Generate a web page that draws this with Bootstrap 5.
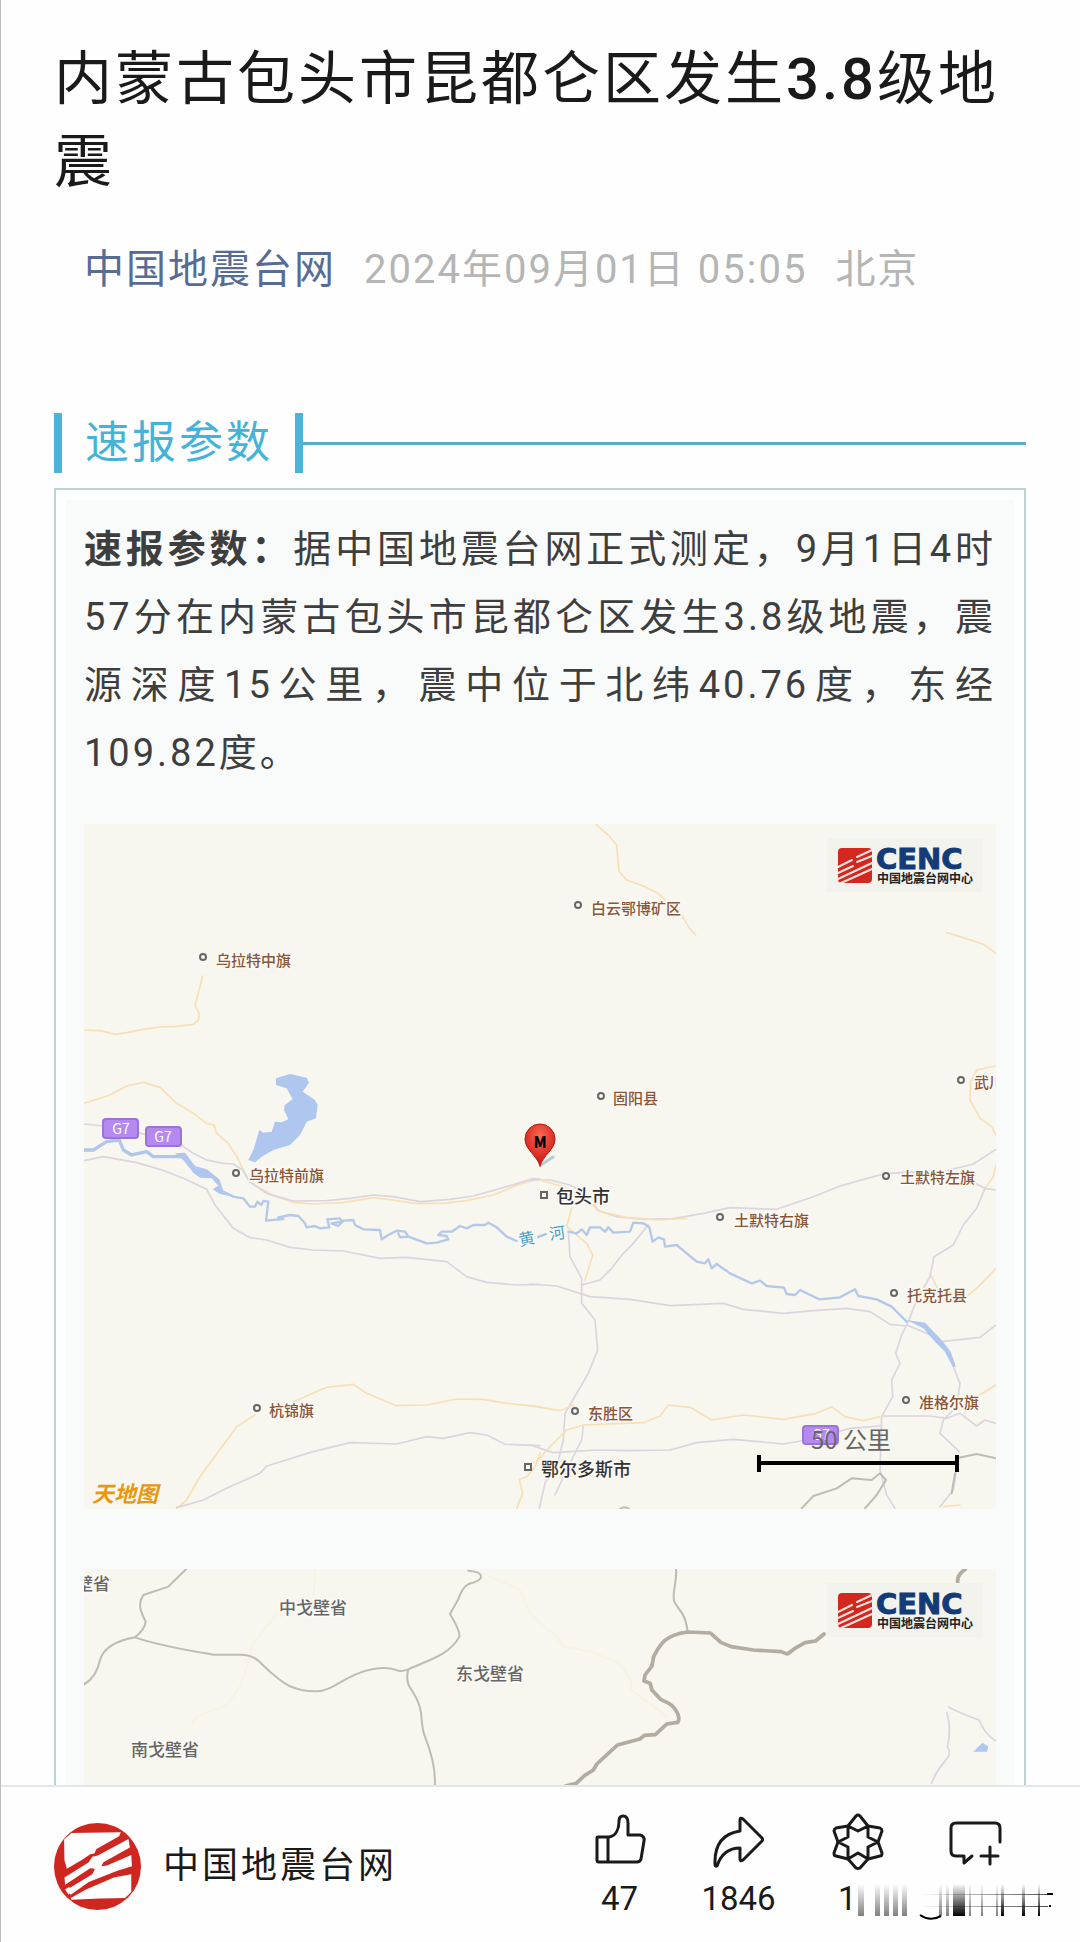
<!DOCTYPE html>
<html lang="zh-CN">
<head>
<meta charset="utf-8">
<meta name="viewport" content="width=device-width, initial-scale=1">
<title>内蒙古包头市昆都仑区发生3.8级地震</title>
<link href="https://cdn.jsdelivr.net/npm/bootstrap@5.3.0/dist/css/bootstrap.min.css" rel="stylesheet">
<style>
  body { font-family: Roboto, "Noto Sans CJK SC", sans-serif; color: #1a1a1a; background: #fefefe; border-left: 1px solid #bdbdbd; }
  .article-scroll { min-height: 0; scrollbar-width: none; padding: 38px 54px 0 53px; }
  .article-scroll::-webkit-scrollbar { display: none; }
  .article-title { font-size: 58px; line-height: 83px; font-weight: 400; letter-spacing: 3px; margin: 0 0 36px; }
  .article-title .magnitude { font-weight: 500; }
  .article-meta { font-size: 40px; line-height: 60px; letter-spacing: 2px; color: #b5b5b5; padding-left: 30px; gap: 28px; margin-bottom: 113px; }
  .article-meta a { color: #576b95; }
  .section-head { color: #45b3d8; margin-bottom: 15px; }
  .section-head h2 { font-size: 44px; line-height: 60px; letter-spacing: 3px; font-weight: 400; border: solid #4cb4d8; border-width: 0 8px; padding: 0 22px 0 23px; }
  .section-rule { height: 3px; background: #55b0c4; }
  .report-box { border: 2px solid #bdd2d2; border-bottom: 0; padding: 10px 10px 0; background: #fdfefe; }
  .report-inner { background: #f9fbfb; padding: 15px 18px 60px; }
  .report-text { font-size: 38px; line-height: 68px; letter-spacing: 3px; color: #3e3e3e; text-align: justify; margin-bottom: 37px; }
  .quake-map { display: block; width: 100%; height: auto; background: #f7f6ef; overflow: hidden; margin-bottom: 60px; }
  .quake-map path { fill: none; stroke-linejoin: round; stroke-linecap: round; }
  .quake-map .road-y { stroke: #f9dfb6; stroke-width: 5; }
  .quake-map .road-p { stroke: #dbd5e0; stroke-width: 5; }
  .quake-map .river { stroke: #b1c6e9; stroke-width: 10; }
  .quake-map .river-thin { stroke: #b4c8ea; stroke-width: 7; }
  .quake-map .water { fill: #afc6ee; stroke: none; }
  .quake-map .edge { stroke: #bfbcb4; stroke-width: 6; }
  .quake-map .edge-wide { stroke: #b3aca1; stroke-width: 11; }
  .quake-map .faint { stroke: #f8f3df; stroke-width: 5; }
  .quake-map .pin { fill: url(#pinFill); stroke: #b51613; }
  .quake-map .scale-end { stroke: #000; stroke-width: 4; stroke-linecap: butt; }
  .quake-map text { font-family: "Noto Sans CJK SC", sans-serif; }
  .county { font-size: 15px; fill: #8a5538; stroke: #fbfaf5; stroke-width: 3px; paint-order: stroke; font-weight: 500; }
  .county-alt { font-size: 17px; fill: #666; }
  .city { font-size: 18px; fill: #333; stroke: #fbfaf5; stroke-width: 3px; paint-order: stroke; font-weight: 500; }
  .spots { fill: #f7f6ef; stroke: #666; stroke-width: 2; }
  .shield rect { fill: #b58af0; stroke: #9a74d8; stroke-width: 2; }
  .shield text { font-size: 14px; fill: #fff; text-anchor: middle; }
  .scale-text { font-size: 24px; fill: #666; }
  .quake-map .cenc { font: bold 29px "DejaVu Sans", sans-serif; fill: #123c78; stroke: #123c78; stroke-width: 1; }
  .cenc-sub { font-size: 12px; font-weight: 700; fill: #222; }
  .river-name { font-size: 16px; fill: #459dca; stroke: #fbfaf5; stroke-width: 2px; paint-order: stroke; }
  .provider { font-size: 22px; font-weight: 700; fill: #e8980f; font-style: italic; }
  .bottom-bar { height: 157px; border-top: 2px solid #e3e7e7; padding: 24px 44px 0 53px; background: #fefefe; }
  .account { gap: 22px; font-size: 36px; letter-spacing: 3px; color: #1a1a1a; height: 110px; }
  .account svg { width: 87px; height: 87px; }
  .action-btn { width: 119px; border: 0; background: none; padding: 0; font-size: 33px; line-height: 40px; color: #1a1a1a; }
  .action-btn svg.glyph { width: 60px; height: 60px; display: block; margin: 0 auto 8px; fill: none; stroke: #1a1a1a; stroke-width: 3; stroke-linejoin: round; stroke-linecap: round; }
  .smear { left: 58px; top: 67px; width: 205px; height: 44px; pointer-events: none; }
  .first-digit { display: block; text-align: left; padding-left: 40px; }
</style>
<script src="https://cdn.jsdelivr.net/npm/bootstrap@5.3.0/dist/js/bootstrap.bundle.min.js"></script>
</head>
<body class="d-flex flex-column vh-100 overflow-hidden">

<main class="article-scroll flex-fill overflow-auto">
  <h1 class="article-title">内蒙古包头市昆都仑区发生<span class="magnitude">3.8</span>级地震</h1>
  <div class="article-meta d-flex flex-wrap">
    <a href="#" class="text-decoration-none">中国地震台网</a>
    <span>2024年09月01日 05:05</span>
    <span>北京</span>
  </div>

  <div class="section-head d-flex align-items-center">
    <h2 class="m-0">速报参数</h2>
    <div class="section-rule flex-fill"></div>
  </div>

  <section class="report-box">
    <div class="report-inner">
      <p class="report-text"><strong>速报参数：</strong>据中国地震台网正式测定，9月1日4时57分在内蒙古包头市昆都仑区发生3.8级地震，震源深度15公里，震中位于北纬40.76度，东经109.82度。</p>

      <!-- regional map -->
      <svg class="quake-map" viewBox="84 824 912 685" role="img" aria-label="震中位置图">
        <g transform="translate(60 810) scale(.33333)">
          <path class="road-y" d="M73 660L120 662 165 673 200 668 250 658 300 651 350 649 400 643 415 630 418 612 405 585 412 560 428 498"/>
          <path class="road-y" d="M73 880L150 855 200 828 250 817 300 832 350 880 400 910 440 940 462 945 470 970 505 1000 530 1040 550 1080 568 1115 640 1157 700 1177 760 1182 850 1178 940 1163 1000 1170 1060 1180 1150 1180 1220 1172 1300 1155 1380 1122 1440 1107"/>
          <path class="road-p" d="M73 942L130 948M236 968L260 975M363 1005L400 1030 440 1050 490 1060 520 1062 548 1080 568 1115 620 1150 700 1173 800 1172 870 1165 940 1155 1000 1160 1080 1175 1170 1168 1240 1158 1340 1130 1420 1106 1440 1107"/>
          <path class="water" d="M648 805L690 792 740 803 747 818 728 845 765 870 773 885 768 925 740 935 720 975 690 1005 640 1020 605 1040 585 1057 565 1050 580 1020 598 960 610 968 635 965 645 935 665 937 685 928 672 900 674 885 698 868 680 835 648 825Z"/>
          <path class="river" d="M73 1020L100 1020 140 995 178 990 190 1020 215 1035 260 1025 280 1040 360 1040"/>
          <path class="water" d="M345 1030L375 1028 405 1068 440 1078 478 1108 490 1142 520 1160 480 1152 458 1138 475 1127 455 1105 420 1103 400 1088 372 1052Z"/>
        </g>
        <g transform="translate(60 1140) scale(.33333)">
          <path class="river-thin" d="M490 155L520 170 550 175 570 200 585 200 592 185 604 195 610 183 625 185 618 242 670 237 655 232 690 225 715 228 735 250 740 262 765 258 780 265 808 262 802 238 840 235 845 245 815 250 835 258 850 242 880 240 885 255 910 268 960 270 965 298 985 285 1010 272 1035 275 1045 290 1020 292 1015 280M1045 290L1100 310 1130 308 1165 298 1160 288 1135 285 1145 275 1175 275 1200 258 1220 265 1240 255 1275 255 1285 248 1310 262 1340 290 1370 303"/>
          <path class="road-p" d="M73 62L130 50 230 68 300 88 370 115 440 148 465 195 520 265 570 293 620 300 690 322 760 330 850 333 960 355 1040 352 1160 365 1220 410 1280 427 1370 435 1440 433"/>
          <path class="road-y" d="M350 1105L380 1080 420 1010 530 860 585 825M700 785L800 742 880 733 920 760 1010 797 1100 795 1190 777 1270 778 1340 790 1440 800M1440 940L1425 980 1400 1010 1378 1018 1388 1060 1370 1105"/>
          <path class="road-p" d="M350 1103L430 1080 500 1045 600 1000 620 978 760 935 870 908 1010 912 1100 890 1150 895 1230 878 1280 885 1335 913 1440 917"/>
        </g>
        <g transform="translate(530 810) scale(.33333)">
          <path class="road-y" d="M198 44L235 75 260 105 267 185 290 210 340 228 385 250 410 275 455 315 475 350 497 376M1250 368L1300 383 1360 403 1398 430M1398 768L1340 780 1322 815 1320 870 1350 925 1385 950 1398 975"/>
        </g>
        <g transform="translate(530 1140) scale(.33333)">
          <path class="road-p" d="M0 120L60 120 120 135 190 175 200 210 260 230 340 238 430 236 520 220 600 203 740 208 850 170 930 138 1000 118 1060 102 1110 98 1250 92 1330 72 1398 28"/>
          <path class="road-y" d="M30 120L100 140 170 180 210 215 290 232 380 240 470 235M125 205L110 260 170 310 188 345 165 420M1398 75L1390 110 1365 145M1200 400L1225 450 1310 470 1345 440 1398 385"/>
          <path class="road-p" d="M115 280L120 350 155 415 155 490 195 540 203 630 175 700 140 760 105 820 100 900 85 960 45 1030 28 1105M155 435L210 420 245 385 280 340 310 310 355 255"/>
          <path class="road-p" d="M0 432L80 438 180 470 300 478 420 497 580 490 640 508 760 520 850 512 950 505 1020 515 1080 553 1130 558M1335 130L1365 145 1398 150M1365 145L1340 205 1300 255 1270 315 1212 350 1200 410 1160 480 1135 545 1115 585 1097 640 1110 670 1085 720 1088 770 1055 830 1050 990 1070 1065 1095 1105M1130 555L1190 580 1235 605 1350 592 1398 555M1270 680L1290 730 1280 800 1240 840 1230 880 1288 935"/>
          <path class="river-thin" d="M115 275L140 280 155 268 170 285 180 262 210 262 225 275 235 262 250 278 300 275 310 248 340 250 358 262 368 305 385 292 402 298 405 320 440 315 500 365 525 370 535 358 545 385 560 372 600 400 665 430 690 422 710 438 762 443 770 462 795 465 810 450 868 478 930 472 975 448 985 468 1040 478 1085 500 1130 545"/>
          <path class="water" d="M1130 540L1185 548 1235 600 1262 635 1278 680 1268 680 1245 635 1215 605 1180 565Z"/>
          <path class="road-y" d="M0 797L90 812 130 795M20 965L60 920 110 870 160 855 340 848 390 828 415 795 480 802 545 840 640 825 760 838 860 820 905 800 945 830 1000 842 1060 828M1340 770L1398 735M1240 1100L1290 1095"/>
          <path class="road-p" d="M1060 828L1200 828 1250 835 1290 820 1340 858 1365 840 1398 850M0 915L70 938 200 930 300 932 420 930 500 908 610 898 760 912 830 900 960 865 1050 858M160 860L155 900 120 970 75 1065M1280 990L1270 1050 1230 1100"/>
          <path class="edge" d="M815 1105L850 1068 920 1045 965 1015 1025 1020 1050 1000 1068 1020 1040 1065 1005 1105M1280 955L1340 942 1398 955M1275 1000L1265 1060M270 1107Q285 1096 297 1107"/>
        </g>
        <g class="shield">
          <rect x="103" y="1119" width="35" height="19" rx="3"/><text x="121" y="1134">G7</text>
          <rect x="146" y="1127" width="35" height="19" rx="3"/><text x="163" y="1142">G7</text>
          <rect x="803" y="1426" width="35" height="18" rx="3"/><text x="821" y="1440">G7</text>
        </g>
        <g class="spots">
          <circle cx="203" cy="957" r="3"/><circle cx="236" cy="1173" r="3"/><circle cx="578" cy="905" r="3"/><circle cx="601" cy="1096" r="3"/><circle cx="961" cy="1080" r="3"/><circle cx="886" cy="1176" r="3"/><circle cx="720" cy="1217" r="3"/><circle cx="894" cy="1293" r="3"/><circle cx="906" cy="1400" r="3"/><circle cx="575" cy="1411" r="3"/><circle cx="257" cy="1408" r="3"/>
          <rect x="541" y="1192" width="6" height="6"/><rect x="525" y="1464" width="6" height="6"/>
        </g>
        <g class="county">
          <text x="216" y="966">乌拉特中旗</text><text x="249" y="1181">乌拉特前旗</text><text x="591" y="914">白云鄂博矿区</text><text x="613" y="1104">固阳县</text><text x="974" y="1088">武川县</text><text x="900" y="1183">土默特左旗</text><text x="734" y="1226">土默特右旗</text><text x="907" y="1301">托克托县</text><text x="919" y="1408">准格尔旗</text><text x="588" y="1419">东胜区</text><text x="269" y="1416">杭锦旗</text>
        </g>
        <g class="city"><text x="556" y="1203">包头市</text><text x="541" y="1476">鄂尔多斯市</text></g>
        <g class="river-name"><text transform="translate(520 1246) rotate(-12)">黄</text><text transform="translate(550 1240) rotate(-8)">河</text></g>
        <path d="M538 1237L546 1234" stroke="#9ec4e6" stroke-width="2"/>
        <path d="M541 1165L553 1157" stroke="#b9ccd2" stroke-width="3"/>
        <defs><radialGradient id="pinFill" cx=".5" cy=".3" r=".6"><stop offset="0" stop-color="#ff6a55"/><stop offset="1" stop-color="#cf1d18"/></radialGradient></defs>
        <path class="pin" d="M540 1166C537 1155 525 1150 525 1139A15 15 0 0 1 555 1139C555 1150 543 1155 540 1166Z"/>
        <text x="540" y="1148" text-anchor="middle" font-size="15" font-weight="900">M</text>
        <text class="scale-text" x="811" y="1449">50 公里</text>
        <path class="scale-end" d="M759 1455V1472M957 1455V1472M759 1463H957"/>
        <text class="provider" x="92" y="1502">天地图</text>
        <rect x="827" y="838" width="156" height="54" fill="#f3f3ee"/>
        <g id="quakeMark"><rect x="838" y="848" width="34" height="35" rx="4" fill="#d3271f"/>
          <path d="M838 867L852 860M857 857L872 850M838 873L853 866M857 862L872 856M838 879L872 863M841 883L872 869" stroke="#fbe4df" stroke-width="2"/></g>
        <text class="cenc" x="876" y="869">CENC</text>
        <text class="cenc-sub" x="877" y="883">中国地震台网中心</text>
      </svg>

      <!-- province map -->
      <svg class="quake-map mb-0" viewBox="84 1569 912 685" role="img" aria-label="震中周边省份图">
        <g transform="translate(40 1540) scale(.33333)">
          <path class="faint" d="M825 90L820 170M715 215L640 310 620 380 600 440 560 495 470 530 455 555M1330 100L1440 150 1470 220 1560 300"/>
          <path class="edge" d="M438 88L405 120 385 140 310 165C290 195 305 220 317 245Q315 268 285 292C230 302 190 325 180 360Q170 410 133 433M285 292C360 318 450 332 520 344H600C650 344 660 370 690 395S750 455 830 454C880 454 920 400 1000 387S1060 405 1105 388C1160 362 1230 345 1258 290Q1262 275 1230 222L1255 178Q1270 130 1300 128C1335 115 1330 95 1285 92M1105 388Q1095 425 1115 450C1160 520 1135 540 1155 590Q1190 680 1184 740"/>
        </g>
        <g transform="translate(540 1540) scale(.34437 .33333)">
          <path class="faint" d="M50 295L70 320 150 335 230 370 265 420 265 450 370 530"/>
          <path class="edge" d="M395 88C398 130 382 160 390 185 405 215 420 215 428 270"/>
          <path class="edge-wide" d="M75 738L105 730 130 706 155 690 165 672 225 615 290 597 303 586 335 584 368 552 400 547C412 525 385 495 370 488L350 478 325 450 320 430 302 423 305 405 325 378 330 350C350 310 365 285 428 276L495 279 525 307 555 320 620 330 700 335 718 342 745 322 770 308 800 303 825 282M1235 88Q1210 105 1213 127"/>
          <path class="road-p" d="M1187 502Q1220 520 1275 540 1290 580 1322 602M1182 518Q1195 570 1183 620C1205 655 1160 660 1137 730"/>
          <path class="water" d="M1258 635L1285 608 1302 620 1298 635Z"/>
        </g>
        <g class="county county-alt">
          <text x="76" y="1590">壁省</text><text x="279" y="1614">中戈壁省</text><text x="456" y="1680">东戈壁省</text><text x="131" y="1756">南戈壁省</text>
        </g>
        <rect x="827" y="1583" width="156" height="54" fill="#f3f3ee"/>
        <use href="#quakeMark" y="745"/>
        <text class="cenc" x="876" y="1614">CENC</text>
        <text class="cenc-sub" x="877" y="1628">中国地震台网中心</text>
      </svg>
    </div>
  </section>
</main>

<footer class="bottom-bar d-flex justify-content-between align-items-start flex-shrink-0">
  <a href="#" class="account d-flex align-items-center text-decoration-none">
    <svg viewBox="158 158 250 262" preserveAspectRatio="none" aria-hidden="true">
      <ellipse cx="283" cy="289" rx="125" ry="131" fill="#cf271f"/>
      <path fill="#fff" d="M208 188L350 186 345 198 280 236 274 250 262 252 240 268 195 296 188 270 187 208Z"/>
      <path fill="#fff" d="M188 322L258 276 268 260 284 256 372 206 376 232 300 276 294 288 310 286 380 254 382 288 340 302 258 336 206 374 196 358 268 312 276 296 262 294 190 344Z"/>
      <path fill="#fff" d="M190 358L202 350 206 366 200 374Z"/>
      <path fill="#fff" d="M206 384L250 358 330 322 380 312 380 366 362 384 290 385 208 389Z"/>
    </svg>
    <span>中国地震台网</span>
  </a>
  <nav class="d-flex align-items-start" aria-label="操作">
    <button type="button" class="action-btn">
      <svg class="glyph" viewBox="0 0 60 60"><path d="M7 27Q7 26 8 26H19C26 25 29 18 29 10Q29 5 33 5 38 5 38 12V24H50Q55 25 54 30L51 48Q50 51 47 51H9Q7 51 7 49ZM18 26V51"/></svg>
      47
    </button>
    <button type="button" class="action-btn">
      <svg class="glyph" viewBox="0 0 60 60"><path d="M31 9Q31 6 34 8L53 27Q54 29 53 30L34 49Q31 51 31 48V37Q14 37 8 55 6 56 6 53 5 24 31 20Z"/></svg>
      1846
    </button>
    <button type="button" class="action-btn position-relative">
      <svg class="glyph" viewBox="0 0 60 60"><path d="M30 4Q31 4 32 5L40 15 52 17Q54 18 54 20L50 31 54 42Q54 45 52 45L40 48 32 57Q30 58 28 57L20 48 8 45Q6 45 6 42L10 31 6 20Q6 18 8 17L20 15 28 5Q29 4 30 4Z"/><path d="M20 15L30 20 40 15V26L50 31 40 36V48L30 42 20 48V36L10 31 20 26Z"/></svg>
      <span class="first-digit">1</span>
      <svg class="smear position-absolute" viewBox="858 1878 205 44" aria-hidden="true">
        <defs>
          <linearGradient id="fadeSoft" x2="0" y2="1"><stop offset="0" stop-color="#555" stop-opacity="0"/><stop offset="1" stop-color="#555" stop-opacity=".75"/></linearGradient>
          <linearGradient id="fadeDark" x2="0" y2="1"><stop offset="0" stop-color="#000" stop-opacity="0"/><stop offset="1" stop-color="#000"/></linearGradient>
          <linearGradient id="fadeSide"><stop offset="0" stop-color="#000" stop-opacity="0"/><stop offset="1" stop-color="#000" stop-opacity=".7"/></linearGradient>
        </defs>
        <g fill="url(#fadeSoft)"><rect x="860" y="1884" width="6" height="32"/><rect x="877" y="1884" width="5" height="32"/><rect x="886" y="1884" width="5" height="32"/><rect x="895" y="1884" width="5" height="32"/><rect x="904" y="1884" width="5" height="32"/><rect x="941" y="1884" width="3" height="32"/><rect x="948" y="1884" width="3" height="32"/><rect x="971" y="1884" width="2" height="32"/><rect x="983" y="1884" width="2" height="32"/><rect x="998" y="1884" width="2" height="32"/></g>
        <g fill="url(#fadeDark)"><rect x="955" y="1884" width="12" height="32"/><rect x="1003" y="1884" width="3" height="32"/><rect x="1024" y="1884" width="3" height="32"/><rect x="1040" y="1884" width="2" height="32"/></g>
        <g fill="url(#fadeSide)"><rect x="920" y="1894" width="135" height="1"/><rect x="920" y="1906" width="130" height="1"/></g>
        <path d="M1049 1894H1055M1051 1906H1053M922 1915Q932 1922 943 1916" fill="none" stroke="#000" stroke-width="2"/>
      </svg>
    </button>
    <button type="button" class="action-btn" aria-label="写留言">
      <svg class="glyph" viewBox="0 0 60 60"><path d="M53 31V17Q53 12 48 12H9Q4 12 4 17V40Q4 45 9 45H17V52L25 45M34 45H51M43 36V53"/></svg>
    </button>
  </nav>
</footer>
</body>
</html>
